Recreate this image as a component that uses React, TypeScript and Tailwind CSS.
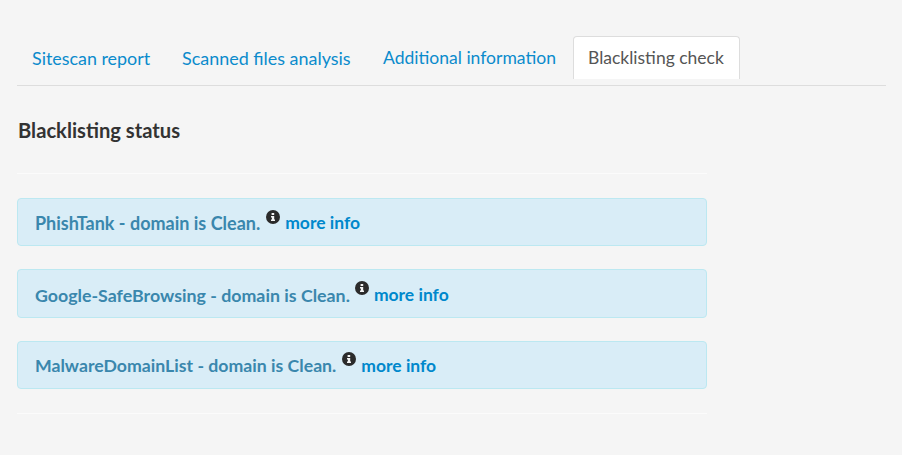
export default function App() {
  const tabs = [
    ["Sitescan report", "w-[150px] text-[17.9px]"],
    ["Scanned files analysis", "w-[201px] text-[17.95px]"],
    ["Additional information", "w-[203px] text-[17.55px]"],
  ];
  const rows = [
    ["PhishTank - domain is Clean.", "h-[48px] mb-[23px] pt-[2px]", "text-[18px]", "ml-[6px] mb-[12px]", "ml-[5px]"],
    ["Google-SafeBrowsing - domain is Clean.", "h-[49px] mb-[23px] pt-[3px]", "text-[17.8px]", "ml-[5px] mb-[14px]", "ml-[5px]"],
    ["MalwareDomainList - domain is Clean.", "h-[48px] mb-[24px] pt-[2px]", "text-[17.7px]", "ml-[6px] mb-[14px]", "ml-[5px]"],
  ];
  return (
    <div className="min-h-[455px] bg-[#f5f5f5] pt-[36px] pl-[17px] pr-[16px] font-['Lato',sans-serif]">
      <div className="flex h-[50px] items-start border-b border-[#dddddd]">
        {tabs.map(([t, c]) => (
          <a key={t} className={`${c} flex h-[43px] items-center pt-[1px] pl-[15px] text-[#0b8bcc]`}>{t}</a>
        ))}
        <a className="ml-[2px] flex h-[43px] w-[167px] items-center rounded-t-[4px] border border-b-0 border-[#dddddd] bg-white pt-[1px] pl-[14px] text-[17.5px] text-[#555555]">Blacklisting check</a>
      </div>
      <div className="w-[690px]">
        <h3 className="mt-[32px] pl-[1px] text-[20.2px] leading-[24px] font-bold text-[#333333]">Blacklisting status</h3>
        <div className="mt-[31px] mb-[24px] h-px bg-[#fbfbfb]" />
        {rows.map(([t, box, size, icon, link]) => (
          <div key={t} className={`${box} flex items-center rounded-[4px] border border-[#bce8f1] bg-[#d9edf7] pl-[17px] font-bold text-[#3a87ad]`}>
            <span className={size}>{t}</span>
            <svg viewBox="0 0 14 14" className={`${icon} h-[14px] w-[14px]`}>
              <circle cx="7" cy="7" r="7" fill="#2b2b2b" />
              <path d="M5.6 3h2.6v1.9H5.6zM5 6h3.2v3.6H9v1.4H5V9.6h.9V7.4H5z" fill="#f4f4f4" />
            </svg>
            <a className={`${link} text-[17.5px] text-[#0088cc]`}>more info</a>
          </div>
        ))}
        <div className="h-px bg-[#fbfbfb]" />
      </div>
    </div>
  );
}
